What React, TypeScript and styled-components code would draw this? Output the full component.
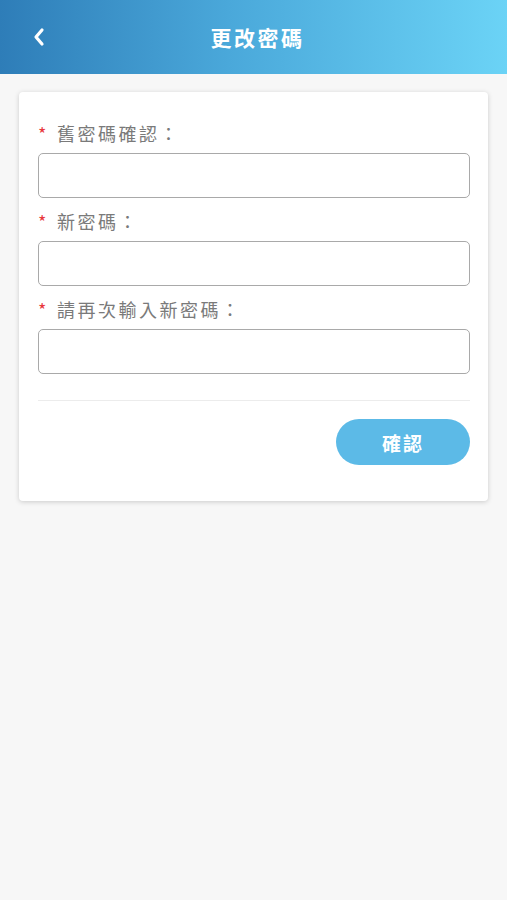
import React from "react";
import styled, { createGlobalStyle } from "styled-components";

const GlobalStyle = createGlobalStyle`
  body {
    margin: 0;
    background: #f7f7f7;
    font-family: "Noto Sans CJK TC", "Noto Sans", sans-serif;
  }
`;

const Page = styled.div`
  min-height: 900px;
  background: #f7f7f7;
`;

const Header = styled.header`
  height: 74px;
  display: flex;
  align-items: center;
  justify-content: center;
  position: relative;
  background: linear-gradient(90deg, #2e7db8 0%, #4aa8da 45%, #6bd3f6 100%);
  color: #fff;
`;

const BackButton = styled.button`
  position: absolute;
  left: 26px;
  top: 24px;
  width: 26px;
  height: 26px;
  padding: 0;
  border: none;
  background: none;
  display: flex;
  align-items: center;
  justify-content: center;
  cursor: pointer;
`;

const Title = styled.h1`
  margin: 0 0 0 8px;
  font-size: 21px;
  font-weight: 700;
  letter-spacing: 2.5px;
`;

const Card = styled.form`
  margin: 18px 19px 0;
  background: #fff;
  border-radius: 4px;
  box-shadow: 0 1px 5px rgba(0, 0, 0, 0.18);
  padding: 21px 18px 36px 19px;
`;

const Field = styled.div`
  display: flex;
  flex-direction: column;
  margin-bottom: 3px;
`;

const Label = styled.label`
  display: flex;
  align-items: center;
  height: 40px;
  font-size: 18px;
  color: #7a7a7a;
  letter-spacing: 2.5px;
`;

const Star = styled.span`
  color: #e8383d;
  margin-right: 8px;
  font-size: 18px;
`;

const Input = styled.input`
  height: 45px;
  box-sizing: border-box;
  border: 1.5px solid #a9a9a9;
  border-radius: 5px;
  font-size: 16px;
  padding: 0 10px;
  outline: none;
`;

const Divider = styled.hr`
  border: none;
  border-top: 1px solid #ececec;
  margin: 26px 0 18px;
`;

const Actions = styled.div`
  display: flex;
  justify-content: flex-end;
`;

const SubmitButton = styled.button`
  width: 134px;
  height: 46px;
  border: none;
  border-radius: 23px;
  background: #5cbae7;
  color: #fff;
  font-family: inherit;
  font-size: 19px;
  font-weight: 700;
  letter-spacing: 2px;
  cursor: pointer;
`;

const fields = ["舊密碼確認：", "新密碼：", "請再次輸入新密碼："];

export default function App() {
  return (
    <Page>
      <GlobalStyle />
      <Header>
        <BackButton aria-label="back">
          <svg width="14" height="20" viewBox="0 0 14 20">
            <path d="M10 3 L4 10 L10 17" fill="none" stroke="#fff" strokeWidth="3.2" strokeLinecap="round" strokeLinejoin="round" />
          </svg>
        </BackButton>
        <Title>更改密碼</Title>
      </Header>
      <Card onSubmit={(e) => e.preventDefault()}>
        {fields.map((f) => (
          <Field key={f}>
            <Label>
              <Star>*</Star>
              {f}
            </Label>
            <Input type="password" />
          </Field>
        ))}
        <Divider />
        <Actions>
          <SubmitButton type="submit">確認</SubmitButton>
        </Actions>
      </Card>
    </Page>
  );
}
